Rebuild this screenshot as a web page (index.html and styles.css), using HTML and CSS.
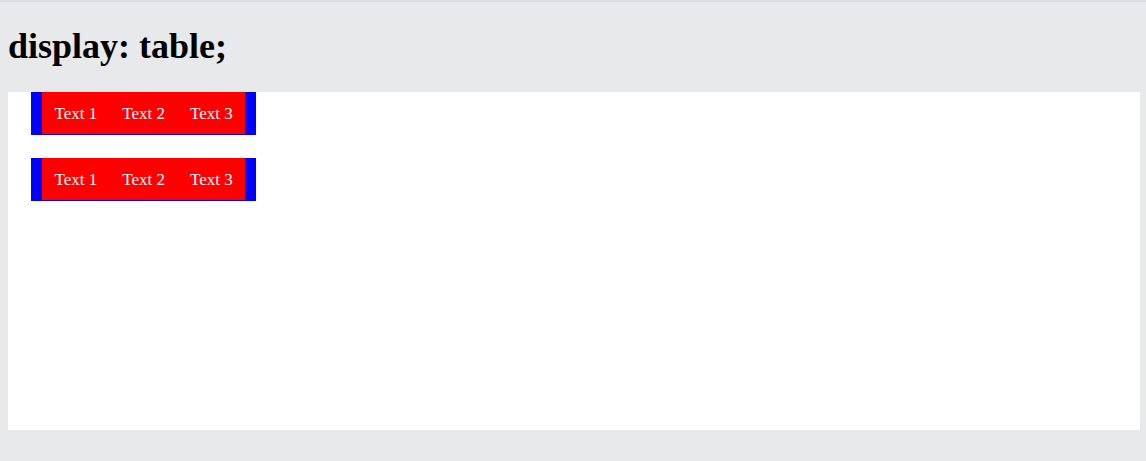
FILE: index.html
```html
<!DOCTYPE html>
<html lang="en">
<head>
    <meta charset="UTF-8">
    <meta name="viewport" content="width=device-width, initial-scale=1.0">
    <title>display: table;</title>
    <link rel="stylesheet" href="styles.css">
</head>
<body>
    <div class="header">
        <h1>display: table;</h1>
    </div>
    <div class="content">
        <div class="table">
            <div class="cell">Text 1</div>
            <div class="cell">Text 2</div>
            <div class="cell">Text 3</div>
        </div>
        <div class="table">
            <div class="cell">Text 1</div>
            <div class="cell">Text 2</div>
            <div class="cell">Text 3</div>
        </div>
    </div>
</body>
</html>
```

FILE: styles.css
```css
html, body {
    margin: 0;
    padding: 0;
}

body {
    font-family: "Liberation Serif", "Times New Roman", serif;
    background-color: #e8e9eb;
    border-top: 2px solid #dcdde0;
    height: 459px;
    box-sizing: content-box;
}

.header {
    padding: 24px 8px 25px;
}

h1 {
    margin: 0;
    font-size: 36px;
    line-height: 41px;
    font-weight: bold;
    color: #000;
}

.content {
    background-color: #fff;
    margin: 0 6px 0 8px;
    height: 338px;
    padding-left: 23px;
    overflow: hidden;
}

.table {
    display: table;
    background-color: blue;
    padding: 0 11px 1px;
    margin-bottom: 23px;
}

.cell {
    display: table-cell;
    background-color: red;
    color: #fff;
    font-size: 17px;
    line-height: 20px;
    padding: 12px 12.5px 10px;
}
```
